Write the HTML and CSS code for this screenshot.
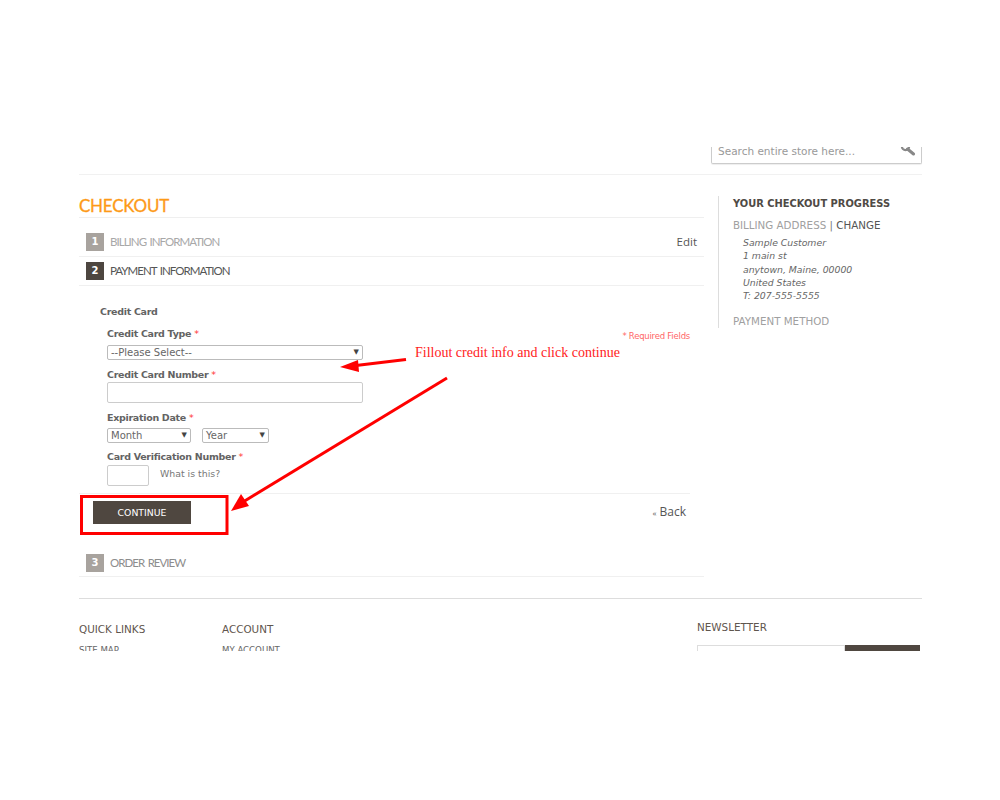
FILE: index.html
```html
<!DOCTYPE html>
<html lang="en">
<head>
<meta charset="utf-8">
<title>Checkout</title>
<link rel="stylesheet" href="styles.css">
</head>
<body>
<div class="shot">
  <div class="page">
    <header class="header">
      <div class="search">
        <span class="search-text">Search entire store here...</span>
        <svg class="search-icon" width="16" height="16" viewBox="0 0 16 16"><circle cx="5.500" cy="3.500" r="3.600" fill="none" stroke="#888" stroke-width="2.200"/><path d="M7.500 6l6 5" stroke="#888" stroke-width="3" stroke-linecap="round"/></svg>
      </div>
    </header>
    <div class="columns">
      <main class="main">
        <h1 class="title">CHECKOUT</h1>
        <section class="step step-first">
          <span class="num">1</span><span class="step-name">BILLING INFORMATION</span><a class="edit">Edit</a>
        </section>
        <section class="step step-active">
          <span class="num num-dark">2</span><span class="step-name">PAYMENT INFORMATION</span>
        </section>
        <div class="payment">
          <div class="method">Credit Card</div>
          <div class="form-top">
            <div class="field">
              <label class="label">Credit Card Type <em>*</em></label>
              <div class="select select-wide"><span>--Please Select--</span><i class="caret">▼</i></div>
            </div>
            <span class="required">* Required Fields</span>
          </div>
          <div class="field field-number">
            <label class="label">Credit Card Number <em>*</em></label>
            <div class="input input-wide"></div>
          </div>
          <div class="field field-date">
            <label class="label">Expiration Date <em>*</em></label>
            <div class="date-row">
              <div class="select select-month"><span>Month</span><i class="caret">▼</i></div>
              <div class="select select-year"><span>Year</span><i class="caret">▼</i></div>
            </div>
          </div>
          <div class="field field-cvv">
            <label class="label">Card Verification Number <em>*</em></label>
            <div class="cvv-row"><div class="input input-cvv"></div><span class="what">What is this?</span></div>
          </div>
          <div class="actions">
            <button class="continue">CONTINUE</button>
            <a class="back"><small>«</small> Back</a>
          </div>
        </div>
        <section class="step step-last">
          <span class="num">3</span><span class="step-name">ORDER REVIEW</span>
        </section>
      </main>
      <aside class="side">
        <h2 class="side-title">YOUR CHECKOUT PROGRESS</h2>
        <div class="side-head">BILLING ADDRESS <span class="sep">|</span> <a>CHANGE</a></div>
        <address class="addr">Sample Customer<br>1 main st<br>anytown, Maine, 00000<br>United States<br>T: 207-555-5555</address>
        <div class="side-head side-pay">PAYMENT METHOD</div>
      </aside>
    </div>
    <footer class="footer">
      <div class="foot-col foot-quick"><h3>QUICK LINKS</h3><a>SITE MAP</a></div>
      <div class="foot-col foot-account"><h3>ACCOUNT</h3><a>MY ACCOUNT</a></div>
      <div class="foot-news">
        <h3>NEWSLETTER</h3>
        <div class="news-form"><div class="news-input"></div><div class="news-btn"></div></div>
      </div>
    </footer>
  </div>
</div>
<svg class="marks" width="1000" height="800" viewBox="0 0 1000 800">
  <rect x="81.500" y="496.500" width="145.500" height="37" fill="none" stroke="#f00" stroke-width="3"/>
  <path d="M406 359.500L356 365.500" stroke="#f00" stroke-width="3" fill="none"/>
  <path d="M340 367l18-7 1 12z" fill="#f00"/>
  <path d="M447 378L243 502" stroke="#f00" stroke-width="3" fill="none"/>
  <path d="M231 511l10-17 8 12z" fill="#f00"/>
</svg>
<div class="note">Fillout credit info and click continue</div>
</body>
</html>
```
FILE: styles.css
```css
* { box-sizing: border-box; }
html, body { margin: 0; padding: 0; background: #fff; }
body { width: 1000px; height: 800px; overflow: hidden; position: relative; font-family: "DejaVu Sans", Verdana, sans-serif; font-size: 10px; color: #636363; }
.shot { margin-top: 147px; height: 504px; overflow: hidden; }
.page { padding: 0 78px 0 79px; }
.header { height: 28px; border-bottom: 1px solid #f1f1f1; display: flex; justify-content: flex-end; }
.search { width: 211px; height: 20px; margin-top: -3px; border: 1px solid #ccc; border-top: 0; border-radius: 0 0 2px 2px; box-shadow: 0 1px 1px #eee; display: flex; justify-content: space-between; padding: 0 5px 0 6px; position: relative; }
.search-text { font-size: 10.500px; color: #999; line-height: 15px; }
.search-icon { margin-top: -1px; }
.columns { display: flex; height: 423px; }
.main { width: 625px; }
.title { margin: 0; height: 43px; padding-top: 20px; border-bottom: 1px solid #efefef; font: 400 17px/22px Lato, sans-serif; letter-spacing: -.25px; color: #fd9a17; -webkit-text-stroke: .3px #fd9a17; }
.step { display: flex; align-items: center; height: 29px; border-bottom: 1px solid #f0f0f0; padding: 0 7px; }
.step-first { height: 39px; padding-top: 10px; }
.num { width: 18px; height: 18px; background: #a8a39e; color: #fff; font: 700 10px/18px "DejaVu Sans", sans-serif; text-align: center; margin-right: 6px; }
.num-dark { background: #4d4640; }
.step-name { font: 400 11.500px/18px Lato, sans-serif; letter-spacing: -.97px; word-spacing: 1.500px; color: #a8a8a8; flex: 1; }
.step-active .step-name { color: #555; }
.step-last .step-name { color: #8d8d8d; }
.edit { font: 400 11.500px/18px "Open Sans", sans-serif; color: #555; }
.payment { padding: 20px 14px 0 0; }
.method { font-size: 9.500px; letter-spacing: -.3px; font-weight: 700; color: #636363; margin-left: 21px; line-height: 12px; }
.form-top { display: flex; justify-content: space-between; margin-top: 9px; margin-left: 28px; }
.label { display: block; font-weight: 700; font-size: 9.500px; letter-spacing: -.3px; line-height: 13px; padding-bottom: 1px; color: #636363; }
.label em { color: #f33; font-style: normal; font-weight: 400; }
.select { border: 1px solid #bbb; border-radius: 2px; height: 15px; font-size: 10px; line-height: 13px; padding-left: 3px; color: #666; display: flex; justify-content: space-between; position: relative; }
.select-wide { width: 256px; margin-top: 4px; }
.caret { font-style: normal; font-size: 7px; color: #444; padding-right: 3px; line-height: 12px; }
.required { font-size: 8.500px; letter-spacing: -.23px; color: #f66; margin-top: 2px; line-height: 14px; }
.field-number { margin: 8px 0 0 28px; }
.input { border: 1px solid #ccc; border-radius: 2px; }
.input-wide { width: 256px; height: 21px; }
.field-date { margin: 8px 0 0 28px; }
.date-row { display: flex; gap: 11px; margin-top: 3px; }
.select-month { width: 84px; }
.select-year { width: 67px; }
.field-cvv { margin: 7px 0 0 28px; }
.cvv-row { display: flex; align-items: center; margin-top: 1px; }
.input-cvv { width: 42px; height: 21px; }
.what { margin-left: 11px; font-size: 9.400px; color: #777; margin-top: -5px; }
.actions { margin-top: 7px; border-top: 1px solid #f0f0f0; height: 52px; display: flex; justify-content: space-between; align-items: flex-start; padding: 7px 4px 0 14px; }
.continue { width: 98px; height: 23px; border: 0; background: #4f4740; color: #fff; font: 400 9.300px/23px "DejaVu Sans", sans-serif; padding: 0; }
.back { font: 400 12px/21px "Open Sans", sans-serif; color: #555; }
.back small { font-size: 8px; }
.step-last { height: 32px; padding-top: 4px; }
.side { margin-left: 14px; height: 132px; margin-top: 21px; border-left: 1px solid #ddd; padding-left: 14px; width: 204px; }
.side-title { margin: 1px 0 0; font-size: 9.900px; font-weight: 700; line-height: 14px; color: #4f4a45; }
.side-head { margin-top: 7px; font-size: 10.300px; line-height: 14px; color: #a0a0a0; }
.side-head a { color: #555; }
.sep { color: #777; }
.addr { margin: 4px 0 0 10px; font-size: 9.300px; line-height: 13.300px; font-style: italic; color: #666; }
.side-pay { margin-top: 12px; }
.footer { display: flex; height: 60px; border-top: 1px solid #ddd; position: relative; }
.footer h3 { margin: 0; font-size: 10.400px; font-weight: 400; color: #5f564e; line-height: 14px; }
.foot-col { width: 143px; padding-top: 23px; }
.foot-col a { display: block; font-size: 8.600px; line-height: 12px; margin-top: 8px; color: #666; }
.foot-news { margin-left: 332px; padding-top: 21px; width: 223px; }
.news-form { display: flex; margin-top: 11px; height: 10px; }
.news-input { width: 148px; border: 1px solid #ddd; border-bottom: 0; }
.news-btn { width: 75px; background: #4f4740; }
.marks { position: absolute; left: 0; top: 0; pointer-events: none; }
.note { position: absolute; left: 415px; top: 344px; font: 400 14px/18px "Liberation Serif", serif; color: #f22; }
```
